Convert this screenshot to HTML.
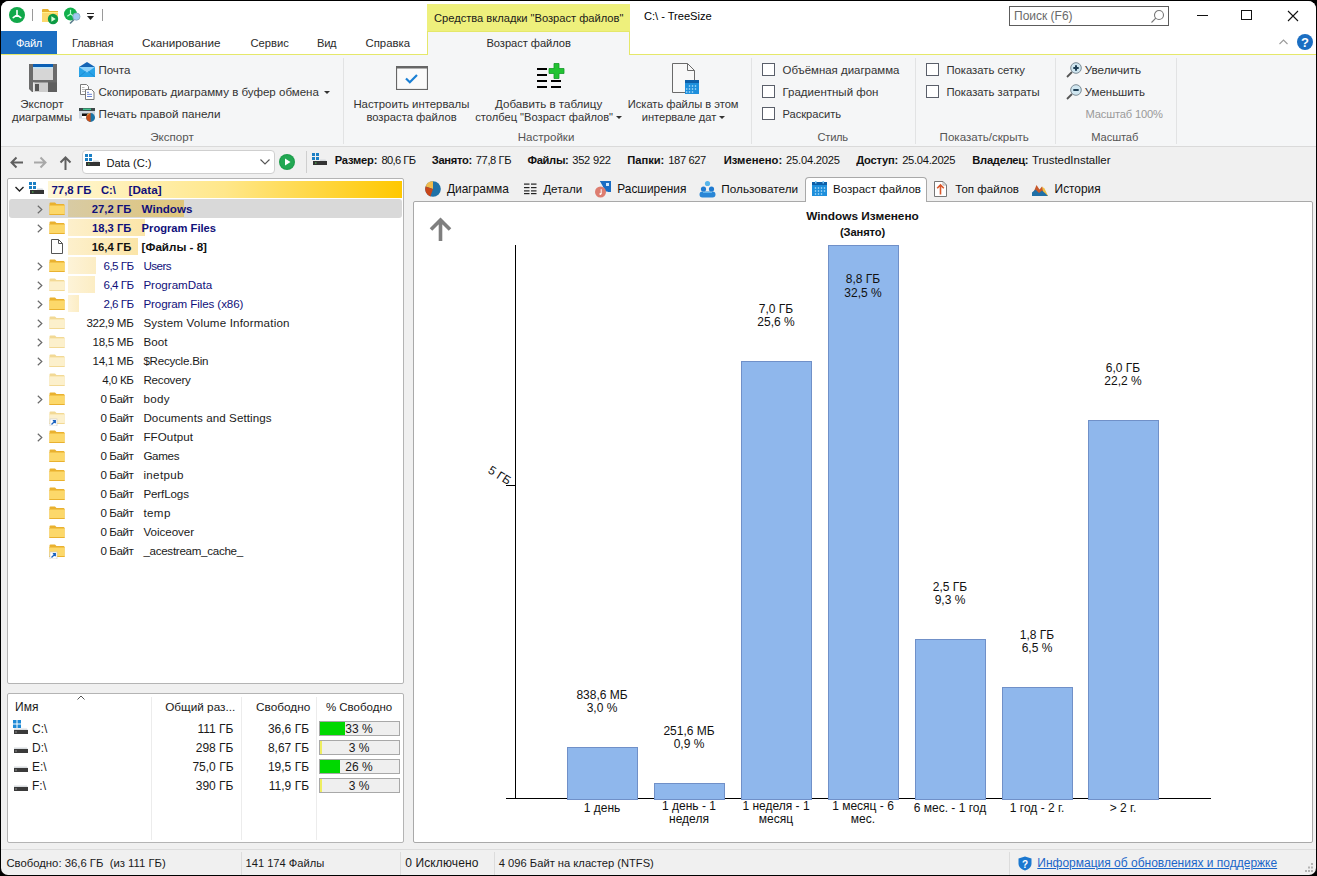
<!DOCTYPE html><html><head><meta charset="utf-8"><style>
html,body{margin:0;padding:0;}
body{width:1317px;height:876px;position:relative;overflow:hidden;background:#000;font-family:"Liberation Sans",sans-serif;font-size:12px;color:#1a1a1a;}
.a{position:absolute;box-sizing:border-box;}
.t{position:absolute;white-space:nowrap;line-height:14px;}
</style></head><body>
<div class="a" style="left:1px;top:1px;width:1315px;height:874px;background:#f0f0f0;border-radius:8px 8px 7px 7px;"></div>
<div class="a" style="left:1px;top:1px;width:1315px;height:53px;background:#fff;border-radius:8px 8px 0 0;"></div>
<div class="a" style="left:1px;top:55px;width:1315px;height:91px;background:#f5f6f7;"></div>
<div class="a" style="left:1px;top:54px;width:1315px;height:1px;background:#e5e86a;"></div>
<div class="a" style="left:1px;top:146px;width:1315px;height:1px;background:#dadada;"></div>
<svg class="a" style="left:9px;top:7px;" width="16" height="16" viewBox="0 0 16 16"><circle cx="8" cy="8" r="8" fill="#12a84a"/><path d="M8 8V3.5M8 8L4.2 10.6M8 8L11.8 10.6" stroke="#fff" stroke-width="1.6" fill="none" stroke-linecap="round"/></svg>
<div class="a" style="left:32px;top:9px;width:1px;height:12px;background:#9a9a9a;"></div>
<svg class="a" style="left:42px;top:9px;" width="17" height="16" viewBox="0 0 17 16"><path d="M0 1a1 1 0 0 1 1-1h5l1.5 2H16v11H0z" fill="#e8b22e"/><rect x="0" y="3" width="16" height="10" fill="#fcd96c"/><rect x="0" y="3" width="16" height="1" fill="#fff08a"/><circle cx="11" cy="10" r="5.2" fill="#0c9a44"/><path d="M9.4 7.2v5.6l4.3-2.8z" fill="#d8ffd8"/></svg>
<svg class="a" style="left:63px;top:7px;" width="18" height="18" viewBox="0 0 18 18"><circle cx="7.5" cy="7" r="6.5" fill="#12b04c"/><path d="M7.5 7V2.8M7.5 7L4.3 9.2M7.5 7L10.7 9.2" stroke="#b8ffd0" stroke-width="1.2" fill="none"/><path d="M11 12.5L7 16.5" stroke="#5a7d8c" stroke-width="1.6"/><circle cx="13.4" cy="9.6" r="3.6" fill="#9fcbf0" stroke="#8aa8c0" stroke-width="0.9"/></svg>
<div class="a" style="left:87px;top:13px;width:7px;height:1px;background:#222;"></div>
<svg class="a" style="left:87px;top:16px;" width="7" height="4" viewBox="0 0 7 4"><path d="M0 0h7L3.5 4z" fill="#222"/></svg>
<div class="a" style="left:102px;top:9px;width:1px;height:12px;background:#9a9a9a;"></div>
<div class="a" style="left:427px;top:4px;width:203px;height:27px;background:#eef07c;"></div>
<div class="t" style="left:434px;top:11px;font-size:11.16px;color:#1a1a1a;letter-spacing:-0.02px;">Средства вкладки "Возраст файлов"</div>
<div class="t" style="left:644px;top:9px;font-size:11.16px;color:#000;letter-spacing:-0.04px;">C:\ - TreeSize</div>
<div class="a" style="left:1009px;top:6px;width:160px;height:20px;border:1px solid #5c5c5c;background:#fff;"></div>
<div class="t" style="left:1014px;top:9px;color:#6a6a6a;">Поиск (F6)</div>
<svg class="a" style="left:1150px;top:9px;" width="15" height="15" viewBox="0 0 15 15"><circle cx="9" cy="6" r="4.5" fill="none" stroke="#777" stroke-width="1.1"/><path d="M5.8 9.2L1.5 13.5" stroke="#777" stroke-width="1.1"/></svg>
<div class="a" style="left:1197px;top:15px;width:11px;height:1px;background:#111;"></div>
<div class="a" style="left:1241px;top:10px;width:11px;height:10px;border:1px solid #111;"></div>
<svg class="a" style="left:1287px;top:10px;" width="12" height="12" viewBox="0 0 12 12"><path d="M1 1L11 11M11 1L1 11" stroke="#111" stroke-width="1.1"/></svg>
<div class="a" style="left:1px;top:31px;width:56px;height:23px;background:#1b6ec2;"></div>
<div class="t" style="left:16px;top:36px;font-size:11.16px;color:#fff;letter-spacing:-0.36px;">Файл</div>
<div class="t" style="left:72px;top:36px;font-size:11.16px;color:#2b2b2b;letter-spacing:-0.17px;">Главная</div>
<div class="t" style="left:142px;top:36px;font-size:11.71px;color:#2b2b2b;">Сканирование</div>
<div class="t" style="left:250.5px;top:36px;font-size:11.21px;color:#2b2b2b;">Сервис</div>
<div class="t" style="left:317px;top:36px;font-size:11.16px;color:#2b2b2b;letter-spacing:-0.3px;">Вид</div>
<div class="t" style="left:365.5px;top:36px;font-size:11.37px;color:#2b2b2b;">Справка</div>
<div class="a" style="left:427px;top:31px;width:203px;height:24px;background:#f5f6f7;border:1px solid #e5e86a;border-bottom:none;"></div>
<div class="t" style="left:486.4px;top:36px;font-size:11.16px;color:#2b2b2b;letter-spacing:-0.05px;">Возраст файлов</div>
<svg class="a" style="left:1279px;top:39px;" width="9" height="6" viewBox="0 0 9 6"><path d="M0.5 5L4.5 1L8.5 5" stroke="#9a9a9a" stroke-width="1.1" fill="none"/></svg>
<svg class="a" style="left:1297px;top:34px;" width="16" height="16" viewBox="0 0 16 16"><circle cx="8" cy="8" r="8" fill="#1b6ec2"/><text x="8" y="13" text-anchor="middle" font-family="Liberation Sans" font-weight="bold" font-size="13" fill="#fff">?</text></svg>
<div class="a" style="left:343px;top:58px;width:1px;height:86px;background:#e2e3e4;"></div>
<div class="a" style="left:751px;top:58px;width:1px;height:86px;background:#e2e3e4;"></div>
<div class="a" style="left:915px;top:58px;width:1px;height:86px;background:#e2e3e4;"></div>
<div class="a" style="left:1055px;top:58px;width:1px;height:86px;background:#e2e3e4;"></div>
<div class="a" style="left:1176px;top:58px;width:1px;height:86px;background:#e2e3e4;"></div>
<svg class="a" style="left:29px;top:64px;" width="28" height="28" viewBox="0 0 28 28"><path d="M0 0h28v28H3l-3-3z" fill="#6b6b6b"/><rect x="4" y="0" width="20" height="3" fill="#0a5fb4"/><rect x="4" y="3" width="20" height="13" fill="#d6d6d6"/><rect x="4" y="3" width="20" height="1.5" fill="#bfe3f5"/><rect x="4" y="18.5" width="15" height="9.5" fill="#cdcdcd"/><rect x="4" y="18.5" width="1.5" height="9.5" fill="#e6e6e6"/><rect x="6" y="20" width="4" height="7" fill="#555"/><rect x="19" y="18.5" width="9" height="9.5" fill="#5f5f5f"/></svg>
<div class="t" style="left:20.2px;top:97px;font-size:11.52px;color:#333;">Экспорт</div>
<div class="t" style="left:12px;top:110px;font-size:11.42px;color:#333;">диаграммы</div>
<svg class="a" style="left:79px;top:62px;" width="16" height="15" viewBox="0 0 16 15"><path d="M0 5L8 0L16 5V15H0z" fill="#1565b5"/><path d="M0 5h16v10H0z" fill="#29a3e8"/><path d="M0 5L8 10.5L16 5" fill="#8fd3fb"/><path d="M0 15L6.5 9.5M16 15L9.5 9.5" stroke="#1b87cf" stroke-width="0.8"/></svg>
<div class="t" style="left:98.4px;top:63px;font-size:11.56px;color:#333;">Почта</div>
<svg class="a" style="left:80px;top:84px;" width="16" height="16" viewBox="0 0 16 16"><path d="M0.5 0.5h6l2 2v8h-8z" fill="#fff" stroke="#7a7a7a" stroke-width="1"/><path d="M2 3.5h2.5M2 5.5h3M2 7.5h3" stroke="#a8a8a8" stroke-width="0.8"/><path d="M5.5 5.5h6l2.5 2.5v7.5h-8.5z" fill="#fff" stroke="#7a7a7a" stroke-width="1"/><path d="M7 8.3h2M7 10.3h5M7 12.5h5" stroke="#5a78d0" stroke-width="0.9"/></svg>
<div class="t" style="left:98.5px;top:85px;font-size:11.54px;color:#333;">Скопировать диаграмму в буфер обмена</div>
<svg class="a" style="left:324px;top:91px;" width="6" height="3" viewBox="0 0 6 3"><path d="M0 0h6L3 3z" fill="#333"/></svg>
<svg class="a" style="left:79px;top:107px;" width="17" height="16" viewBox="0 0 17 16"><rect x="0" y="1" width="16" height="3" fill="#3d4a4a"/><rect x="4" y="1.5" width="8" height="1.5" fill="#3fc08a"/><rect x="0" y="4" width="16" height="7.5" fill="#cfd6df"/><rect x="3" y="6.5" width="7" height="2.5" fill="#111"/><rect x="3" y="9" width="5" height="2" fill="#fff"/><circle cx="11.6" cy="10.5" r="4.4" fill="#1a74a8"/><path d="M11.6 6.1A4.4 4.4 0 0 0 11.6 14.9z" fill="#c8501a"/><path d="M11.6 6.1A4.4 4.4 0 0 0 7.4 9z" fill="#f0b860"/></svg>
<div class="t" style="left:98.5px;top:107px;font-size:11.69px;color:#333;">Печать правой панели</div>
<div class="t" style="left:150.3px;top:130px;font-size:11.58px;color:#555;">Экспорт</div>
<svg class="a" style="left:396px;top:66px;" width="32" height="24" viewBox="0 0 32 24"><rect x="0.5" y="0.5" width="31" height="23" fill="#fafafa" stroke="#666" stroke-width="1.2"/><rect x="0.5" y="0.5" width="31" height="2" fill="#666"/><path d="M10 12.5L13.8 16.2L21 9" stroke="#1a7fd4" stroke-width="2.2" fill="none"/></svg>
<div class="t" style="left:353.4px;top:97px;font-size:11.36px;color:#333;">Настроить интервалы</div>
<div class="t" style="left:366.4px;top:110px;font-size:11.26px;color:#333;">возраста файлов</div>
<svg class="a" style="left:537px;top:63px;" width="28" height="26" viewBox="0 0 28 26"><g fill="#000"><rect x="0" y="5" width="10" height="2"/><rect x="0" y="11" width="10" height="2"/><rect x="0" y="17" width="10" height="2"/><rect x="0" y="23" width="10" height="2"/><rect x="14" y="17" width="10" height="2"/><rect x="14" y="23" width="10" height="2"/></g><path d="M17 0.5h5v5h5v5h-5v5h-5v-5h-5v-5h5z" fill="#22c332" stroke="#14992a" stroke-width="0.8"/></svg>
<div class="t" style="left:495px;top:97px;font-size:11.6px;color:#333;">Добавить в таблицу</div>
<div class="t" style="left:475.2px;top:110px;font-size:11.16px;color:#333;letter-spacing:-0.01px;">столбец "Возраст файлов"</div>
<svg class="a" style="left:616px;top:116px;" width="6" height="3" viewBox="0 0 6 3"><path d="M0 0h6L3 3z" fill="#333"/></svg>
<svg class="a" style="left:672px;top:63px;" width="27" height="31" viewBox="0 0 27 31"><path d="M0.5 0.5h15l7 7v22h-22z" fill="#f8f8f8" stroke="#6a6a6a" stroke-width="1"/><path d="M15.5 0.5v7h7" fill="none" stroke="#6a6a6a" stroke-width="1"/><rect x="13" y="17" width="14" height="14" fill="#1e8fdc"/><rect x="13" y="17" width="14" height="3" fill="#0d5fa8"/><g fill="#bfe6ff"><circle cx="17.5" cy="23" r="0.8"/><circle cx="20.5" cy="23" r="0.8"/><circle cx="23.5" cy="23" r="0.8"/><circle cx="14.7" cy="26" r="0.8"/><circle cx="17.5" cy="26" r="0.8"/><circle cx="20.5" cy="26" r="0.8"/><circle cx="23.5" cy="26" r="0.8"/><circle cx="14.7" cy="29" r="0.8"/><circle cx="17.5" cy="29" r="0.8"/><circle cx="20.5" cy="29" r="0.8"/></g></svg>
<div class="t" style="left:627.8px;top:97px;font-size:11.16px;color:#333;letter-spacing:-0.03px;">Искать файлы в этом</div>
<div class="t" style="left:641.8px;top:110px;font-size:11.16px;color:#333;letter-spacing:-0.06px;">интервале дат</div>
<svg class="a" style="left:719px;top:116px;" width="6" height="3" viewBox="0 0 6 3"><path d="M0 0h6L3 3z" fill="#333"/></svg>
<div class="t" style="left:517.8px;top:130px;font-size:11.54px;color:#555;">Настройки</div>
<div class="a" style="left:762px;top:63px;width:13px;height:13px;border:1px solid #5a5f6a;background:#fff;"></div>
<div class="t" style="left:782.5px;top:63px;font-size:11.45px;color:#333;">Объёмная диаграмма</div>
<div class="a" style="left:762px;top:85px;width:13px;height:13px;border:1px solid #5a5f6a;background:#fff;"></div>
<div class="t" style="left:782.5px;top:85px;font-size:11.5px;color:#333;">Градиентный фон</div>
<div class="a" style="left:762px;top:107px;width:13px;height:13px;border:1px solid #5a5f6a;background:#fff;"></div>
<div class="t" style="left:782.5px;top:107px;font-size:11.16px;color:#333;letter-spacing:-0.04px;">Раскрасить</div>
<div class="t" style="left:817.5px;top:130px;font-size:11.16px;color:#555;letter-spacing:-0.27px;">Стиль</div>
<div class="a" style="left:926px;top:63px;width:13px;height:13px;border:1px solid #5a5f6a;background:#fff;"></div>
<div class="t" style="left:946.4px;top:63px;font-size:11.29px;color:#333;">Показать сетку</div>
<div class="a" style="left:926px;top:85px;width:13px;height:13px;border:1px solid #5a5f6a;background:#fff;"></div>
<div class="t" style="left:946.4px;top:85px;font-size:11.31px;color:#333;">Показать затраты</div>
<div class="t" style="left:939.6px;top:130px;font-size:11.57px;color:#555;">Показать/скрыть</div>
<svg class="a" style="left:1066px;top:62px;" width="16" height="16" viewBox="0 0 16 16"><path d="M1 15L6 10" stroke="#555" stroke-width="1.8"/><circle cx="10" cy="6" r="5.3" fill="#cfe6f0" stroke="#7d8c96" stroke-width="1"/><path d="M7.3 6h5.4M10 3.3v5.4" stroke="#1f3f55" stroke-width="2"/></svg>
<div class="t" style="left:1084.7px;top:63px;font-size:11.69px;color:#333;">Увеличить</div>
<svg class="a" style="left:1066px;top:84px;" width="16" height="16" viewBox="0 0 16 16"><path d="M1 15L6 10" stroke="#555" stroke-width="1.8"/><circle cx="10" cy="6" r="5.3" fill="#cfe6f0" stroke="#7d8c96" stroke-width="1"/><path d="M7.3 6h5.4" stroke="#1f3f55" stroke-width="2"/></svg>
<div class="t" style="left:1084.7px;top:85px;font-size:11.51px;color:#333;">Уменьшить</div>
<div class="t" style="left:1085.5px;top:107px;font-size:11.16px;color:#9a9a9a;letter-spacing:-0.18px;">Масштаб 100%</div>
<div class="t" style="left:1091.3px;top:130px;font-size:11.16px;color:#555;letter-spacing:-0.12px;">Масштаб</div>
<svg class="a" style="left:10px;top:156px;" width="14" height="13" viewBox="0 0 14 13"><path d="M13 6.5H2M6.5 1.5L1.5 6.5L6.5 11.5" stroke="#5f5f5f" stroke-width="2" fill="none"/></svg>
<svg class="a" style="left:33px;top:156px;" width="14" height="13" viewBox="0 0 14 13"><path d="M1 6.5H12M7.5 1.5L12.5 6.5L7.5 11.5" stroke="#a8a8a8" stroke-width="2" fill="none"/></svg>
<svg class="a" style="left:59px;top:156px;" width="13" height="14" viewBox="0 0 13 14"><path d="M6.5 14V2M1.5 6.5L6.5 1.5L11.5 6.5" stroke="#5f5f5f" stroke-width="2" fill="none"/></svg>
<div class="a" style="left:82px;top:150px;width:193px;height:24px;background:#fff;border:1px solid #cfcfcf;border-radius:4px;"></div>
<svg class="a" style="left:85px;top:154px;" width="16" height="13" viewBox="0 0 16 13"><g fill="#1b7fc4"><rect x="0" y="0" width="3" height="3"/><rect x="4" y="0" width="3" height="3"/><rect x="0" y="4" width="3" height="3"/><rect x="4" y="4" width="3" height="3"/></g><path d="M8 6.5h5.5l1 1.5H8z" fill="#d6dadd"/><rect x="1" y="8" width="14" height="4" fill="#333"/><rect x="3" y="9.5" width="1.5" height="1" fill="#5c5"/></svg>
<div class="t" style="left:106.6px;top:156px;font-size:11.16px;color:#111;letter-spacing:-0.05px;">Data (C:)</div>
<svg class="a" style="left:260px;top:159px;" width="10" height="6" viewBox="0 0 10 6"><path d="M0.5 0.5L5 5L9.5 0.5" stroke="#555" stroke-width="1.1" fill="none"/></svg>
<svg class="a" style="left:279px;top:154px;" width="16" height="16" viewBox="0 0 16 16"><circle cx="8" cy="8" r="8" fill="#1e9e4c"/><circle cx="8" cy="8" r="6.8" fill="#22a853"/><path d="M6 4.5v7l5.5-3.5z" fill="#fff"/></svg>
<div class="a" style="left:306px;top:151px;width:1px;height:22px;background:#cfcfcf;"></div>
<svg class="a" style="left:312px;top:153px;" width="16" height="13" viewBox="0 0 16 13"><g fill="#1b7fc4"><rect x="0" y="0" width="3" height="3"/><rect x="4" y="0" width="3" height="3"/><rect x="0" y="4" width="3" height="3"/><rect x="4" y="4" width="3" height="3"/></g><path d="M8 6.5h5.5l1 1.5H8z" fill="#d6dadd"/><rect x="1" y="8" width="14" height="4" fill="#333"/><rect x="3" y="9.5" width="1.5" height="1" fill="#5c5"/></svg>
<div class="t" style="left:334.7px;top:153px;font-size:11.16px;font-weight:bold;color:#111;letter-spacing:-0.19px;">Размер:</div>
<div class="t" style="left:381.4px;top:153px;font-size:11.16px;color:#111;letter-spacing:-0.6px;">80,6 ГБ</div>
<div class="t" style="left:431.8px;top:153px;font-size:11.16px;font-weight:bold;color:#111;letter-spacing:-0.32px;">Занято:</div>
<div class="t" style="left:475.8px;top:153px;font-size:11.16px;color:#111;letter-spacing:-0.41px;">77,8 ГБ</div>
<div class="t" style="left:527.5px;top:153px;font-size:11.16px;font-weight:bold;color:#111;letter-spacing:-0.32px;">Файлы:</div>
<div class="t" style="left:572.2px;top:153px;font-size:11.16px;color:#111;letter-spacing:-0.24px;">352 922</div>
<div class="t" style="left:627.3px;top:153px;font-size:11.16px;font-weight:bold;color:#111;letter-spacing:-0.04px;">Папки:</div>
<div class="t" style="left:668.3px;top:153px;font-size:11.16px;color:#111;letter-spacing:-0.39px;">187 627</div>
<div class="t" style="left:723.7px;top:153px;font-size:11.26px;font-weight:bold;color:#111;">Изменено:</div>
<div class="t" style="left:786.1px;top:153px;font-size:11.16px;color:#111;letter-spacing:-0.22px;">25.04.2025</div>
<div class="t" style="left:856.2px;top:153px;font-size:11.16px;font-weight:bold;color:#111;letter-spacing:-0.24px;">Доступ:</div>
<div class="t" style="left:902.2px;top:153px;font-size:11.16px;color:#111;letter-spacing:-0.28px;">25.04.2025</div>
<div class="t" style="left:972.3px;top:153px;font-size:11.16px;font-weight:bold;color:#111;letter-spacing:-0.26px;">Владелец:</div>
<div class="t" style="left:1031.9px;top:153px;font-size:11.48px;color:#111;">TrustedInstaller</div>
<div class="a" style="left:7px;top:178px;width:397px;height:506px;background:#fff;border:1px solid #b4b4b4;border-radius:2px;"></div>
<div class="a" style="left:48px;top:181px;width:354px;height:17px;background:linear-gradient(to right,#fff7d6 0%,#ffe78a 50%,#ffc800 100%);"></div>
<svg class="a" style="left:15px;top:186px;" width="9" height="7" viewBox="0 0 9 7"><path d="M0.5 1L4.5 5L8.5 1" stroke="#222" stroke-width="1.4" fill="none"/></svg>
<svg class="a" style="left:29px;top:182px;" width="16" height="13" viewBox="0 0 16 13"><g fill="#1b7fc4"><rect x="0" y="0" width="3" height="3"/><rect x="4" y="0" width="3" height="3"/><rect x="0" y="4" width="3" height="3"/><rect x="4" y="4" width="3" height="3"/></g><path d="M8 6.5h5.5l1 1.5H8z" fill="#d6dadd"/><rect x="1" y="8" width="14" height="4" fill="#333"/><rect x="3" y="9.5" width="1.5" height="1" fill="#5c5"/></svg>
<div class="t" style="left:51.5px;top:183px;font-size:11.39px;font-weight:bold;color:#10107a;">77,8 ГБ</div>
<div class="t" style="left:101px;top:183px;font-size:11.25px;font-weight:bold;color:#10107a;">C:\</div>
<div class="t" style="left:128.6px;top:183px;font-size:11.64px;font-weight:bold;color:#10107a;">[Data]</div>
<div class="a" style="left:9px;top:199px;width:393px;height:19px;background:#d9d9d9;border-radius:3px;"></div>
<div class="a" style="left:68px;top:200px;width:116px;height:17px;background:linear-gradient(to right,#d8cba4,#dfc57a);"></div>
<svg class="a" style="left:37px;top:205px;" width="6" height="9" viewBox="0 0 6 9"><path d="M0.8 0.8L4.8 4.5L0.8 8.2" stroke="#6a6a6a" stroke-width="1.2" fill="none"/></svg>
<svg class="a" style="left:49px;top:202px;" width="16" height="15" viewBox="0 0 16 15"><path d="M0.5 1.5a1 1 0 0 1 1-1h4.5l1.5 1.5h7a1 1 0 0 1 1 1V13H0.5z" fill="#e9b12f"/><rect x="0.5" y="3" width="15" height="10" rx="0.5" fill="#fcd86a"/><rect x="0.5" y="3" width="15" height="1" fill="#f3c44a"/><rect x="0.5" y="12" width="15" height="1" fill="#e9b12f"/></svg>
<div class="t" style="right:1185.7px;top:201.5px;font-size:11.28px;font-weight:bold;color:#10107a;">27,2 ГБ</div>
<div class="t" style="left:141.6px;top:201.5px;font-size:11.6px;font-weight:bold;color:#10107a;">Windows</div>
<div class="a" style="left:68px;top:219px;width:77px;height:17px;background:linear-gradient(to right,#fdf0cc,#fbe5a8);"></div>
<svg class="a" style="left:37px;top:224px;" width="6" height="9" viewBox="0 0 6 9"><path d="M0.8 0.8L4.8 4.5L0.8 8.2" stroke="#6a6a6a" stroke-width="1.2" fill="none"/></svg>
<svg class="a" style="left:49px;top:221px;" width="16" height="15" viewBox="0 0 16 15"><path d="M0.5 1.5a1 1 0 0 1 1-1h4.5l1.5 1.5h7a1 1 0 0 1 1 1V13H0.5z" fill="#e9b12f"/><rect x="0.5" y="3" width="15" height="10" rx="0.5" fill="#fcd86a"/><rect x="0.5" y="3" width="15" height="1" fill="#f3c44a"/><rect x="0.5" y="12" width="15" height="1" fill="#e9b12f"/></svg>
<div class="t" style="right:1185.7px;top:220.5px;font-size:11.2px;font-weight:bold;color:#10107a;">18,3 ГБ</div>
<div class="t" style="left:141.6px;top:220.5px;font-size:11.17px;font-weight:bold;color:#10107a;">Program Files</div>
<div class="a" style="left:68px;top:238px;width:70px;height:17px;background:linear-gradient(to right,#fdf0cc,#fbe5a8);"></div>
<svg class="a" style="left:51px;top:239px;" width="12" height="15" viewBox="0 0 12 15"><path d="M0.5 0.5h7l4 4v10h-11z" fill="#fff" stroke="#555" stroke-width="1"/><path d="M7.5 0.5v4h4" fill="none" stroke="#555" stroke-width="1"/></svg>
<div class="t" style="right:1185.7px;top:239.5px;font-size:11.28px;font-weight:bold;color:#111;">16,4 ГБ</div>
<div class="t" style="left:141.6px;top:239.5px;font-size:11.64px;font-weight:bold;color:#111;">[Файлы - 8]</div>
<div class="a" style="left:68px;top:257px;width:28px;height:17px;background:linear-gradient(to right,#fdf3d8,#fcedc4);"></div>
<svg class="a" style="left:37px;top:262px;" width="6" height="9" viewBox="0 0 6 9"><path d="M0.8 0.8L4.8 4.5L0.8 8.2" stroke="#6a6a6a" stroke-width="1.2" fill="none"/></svg>
<svg class="a" style="left:49px;top:259px;" width="16" height="15" viewBox="0 0 16 15"><path d="M0.5 1.5a1 1 0 0 1 1-1h4.5l1.5 1.5h7a1 1 0 0 1 1 1V13H0.5z" fill="#e9b12f"/><rect x="0.5" y="3" width="15" height="10" rx="0.5" fill="#fcd86a"/><rect x="0.5" y="3" width="15" height="1" fill="#f3c44a"/><rect x="0.5" y="12" width="15" height="1" fill="#e9b12f"/></svg>
<div class="t" style="right:1183.5px;top:258.5px;font-size:11.6px;color:#10107a;letter-spacing:-0.54px;">6,5 ГБ</div>
<div class="t" style="left:143.4px;top:258.5px;font-size:11.6px;color:#10107a;letter-spacing:-0.54px;">Users</div>
<div class="a" style="left:68px;top:276px;width:27px;height:17px;background:linear-gradient(to right,#fdf3d8,#fcedc4);"></div>
<svg class="a" style="left:37px;top:281px;" width="6" height="9" viewBox="0 0 6 9"><path d="M0.8 0.8L4.8 4.5L0.8 8.2" stroke="#6a6a6a" stroke-width="1.2" fill="none"/></svg>
<svg class="a" style="left:49px;top:278px;" width="16" height="15" viewBox="0 0 16 15"><path d="M0.5 1.5a1 1 0 0 1 1-1h4.5l1.5 1.5h7a1 1 0 0 1 1 1V13H0.5z" fill="#f2d995"/><rect x="0.5" y="3" width="15" height="10" rx="0.5" fill="#fcf0cc"/><rect x="0.5" y="3" width="15" height="1" fill="#fae8b5"/><rect x="0.5" y="12" width="15" height="1" fill="#f2d995"/></svg>
<div class="t" style="right:1183.5px;top:277.5px;font-size:11.6px;color:#10107a;letter-spacing:-0.54px;">6,4 ГБ</div>
<div class="t" style="left:143.4px;top:277.5px;font-size:11.6px;color:#10107a;letter-spacing:-0.02px;">ProgramData</div>
<div class="a" style="left:68px;top:295px;width:10.5px;height:17px;background:linear-gradient(to right,#fdf3d8,#fcedc4);"></div>
<svg class="a" style="left:37px;top:300px;" width="6" height="9" viewBox="0 0 6 9"><path d="M0.8 0.8L4.8 4.5L0.8 8.2" stroke="#6a6a6a" stroke-width="1.2" fill="none"/></svg>
<svg class="a" style="left:49px;top:297px;" width="16" height="15" viewBox="0 0 16 15"><path d="M0.5 1.5a1 1 0 0 1 1-1h4.5l1.5 1.5h7a1 1 0 0 1 1 1V13H0.5z" fill="#e9b12f"/><rect x="0.5" y="3" width="15" height="10" rx="0.5" fill="#fcd86a"/><rect x="0.5" y="3" width="15" height="1" fill="#f3c44a"/><rect x="0.5" y="12" width="15" height="1" fill="#e9b12f"/></svg>
<div class="t" style="right:1183.5px;top:296.5px;font-size:11.6px;color:#10107a;letter-spacing:-0.54px;">2,6 ГБ</div>
<div class="t" style="left:143.4px;top:296.5px;font-size:11.6px;color:#10107a;letter-spacing:-0.1px;">Program Files (x86)</div>
<svg class="a" style="left:37px;top:319px;" width="6" height="9" viewBox="0 0 6 9"><path d="M0.8 0.8L4.8 4.5L0.8 8.2" stroke="#6a6a6a" stroke-width="1.2" fill="none"/></svg>
<svg class="a" style="left:49px;top:316px;" width="16" height="15" viewBox="0 0 16 15"><path d="M0.5 1.5a1 1 0 0 1 1-1h4.5l1.5 1.5h7a1 1 0 0 1 1 1V13H0.5z" fill="#f2d995"/><rect x="0.5" y="3" width="15" height="10" rx="0.5" fill="#fcf0cc"/><rect x="0.5" y="3" width="15" height="1" fill="#fae8b5"/><rect x="0.5" y="12" width="15" height="1" fill="#f2d995"/></svg>
<div class="t" style="right:1183.5px;top:315.5px;font-size:11.6px;color:#1a1a1a;letter-spacing:-0.3px;">322,9 МБ</div>
<div class="t" style="left:143.4px;top:315.5px;font-size:11.6px;color:#1a1a1a;letter-spacing:0.18px;">System Volume Information</div>
<svg class="a" style="left:37px;top:338px;" width="6" height="9" viewBox="0 0 6 9"><path d="M0.8 0.8L4.8 4.5L0.8 8.2" stroke="#6a6a6a" stroke-width="1.2" fill="none"/></svg>
<svg class="a" style="left:49px;top:335px;" width="16" height="15" viewBox="0 0 16 15"><path d="M0.5 1.5a1 1 0 0 1 1-1h4.5l1.5 1.5h7a1 1 0 0 1 1 1V13H0.5z" fill="#f2d995"/><rect x="0.5" y="3" width="15" height="10" rx="0.5" fill="#fcf0cc"/><rect x="0.5" y="3" width="15" height="1" fill="#fae8b5"/><rect x="0.5" y="12" width="15" height="1" fill="#f2d995"/></svg>
<div class="t" style="right:1183.5px;top:334.5px;font-size:11.6px;color:#1a1a1a;letter-spacing:-0.3px;">18,5 МБ</div>
<div class="t" style="left:143.4px;top:334.5px;font-size:11.6px;color:#1a1a1a;letter-spacing:0.08px;">Boot</div>
<svg class="a" style="left:37px;top:357px;" width="6" height="9" viewBox="0 0 6 9"><path d="M0.8 0.8L4.8 4.5L0.8 8.2" stroke="#6a6a6a" stroke-width="1.2" fill="none"/></svg>
<svg class="a" style="left:49px;top:354px;" width="16" height="15" viewBox="0 0 16 15"><path d="M0.5 1.5a1 1 0 0 1 1-1h4.5l1.5 1.5h7a1 1 0 0 1 1 1V13H0.5z" fill="#f2d995"/><rect x="0.5" y="3" width="15" height="10" rx="0.5" fill="#fcf0cc"/><rect x="0.5" y="3" width="15" height="1" fill="#fae8b5"/><rect x="0.5" y="12" width="15" height="1" fill="#f2d995"/></svg>
<div class="t" style="right:1183.5px;top:353.5px;font-size:11.6px;color:#1a1a1a;letter-spacing:-0.3px;">14,1 МБ</div>
<div class="t" style="left:143.4px;top:353.5px;font-size:11.6px;color:#1a1a1a;letter-spacing:-0.24px;">$Recycle.Bin</div>
<svg class="a" style="left:49px;top:373px;" width="16" height="15" viewBox="0 0 16 15"><path d="M0.5 1.5a1 1 0 0 1 1-1h4.5l1.5 1.5h7a1 1 0 0 1 1 1V13H0.5z" fill="#f2d995"/><rect x="0.5" y="3" width="15" height="10" rx="0.5" fill="#fcf0cc"/><rect x="0.5" y="3" width="15" height="1" fill="#fae8b5"/><rect x="0.5" y="12" width="15" height="1" fill="#f2d995"/></svg>
<div class="t" style="right:1183.5px;top:372.5px;font-size:11.6px;color:#1a1a1a;letter-spacing:-0.39px;">4,0 КБ</div>
<div class="t" style="left:143.4px;top:372.5px;font-size:11.6px;color:#1a1a1a;letter-spacing:-0.21px;">Recovery</div>
<svg class="a" style="left:37px;top:395px;" width="6" height="9" viewBox="0 0 6 9"><path d="M0.8 0.8L4.8 4.5L0.8 8.2" stroke="#6a6a6a" stroke-width="1.2" fill="none"/></svg>
<svg class="a" style="left:49px;top:392px;" width="16" height="15" viewBox="0 0 16 15"><path d="M0.5 1.5a1 1 0 0 1 1-1h4.5l1.5 1.5h7a1 1 0 0 1 1 1V13H0.5z" fill="#e9b12f"/><rect x="0.5" y="3" width="15" height="10" rx="0.5" fill="#fcd86a"/><rect x="0.5" y="3" width="15" height="1" fill="#f3c44a"/><rect x="0.5" y="12" width="15" height="1" fill="#e9b12f"/></svg>
<div class="t" style="right:1183.5px;top:391.5px;font-size:11.6px;color:#1a1a1a;letter-spacing:-0.42px;">0 Байт</div>
<div class="t" style="left:143.4px;top:391.5px;font-size:11.6px;color:#1a1a1a;letter-spacing:0.33px;">body</div>
<svg class="a" style="left:49px;top:411px;" width="16" height="15" viewBox="0 0 16 15"><path d="M0.5 1.5a1 1 0 0 1 1-1h4.5l1.5 1.5h7a1 1 0 0 1 1 1V13H0.5z" fill="#f2d995"/><rect x="0.5" y="3" width="15" height="10" rx="0.5" fill="#fcf0cc"/><rect x="0.5" y="3" width="15" height="1" fill="#fae8b5"/><rect x="0.5" y="12" width="15" height="1" fill="#f2d995"/><rect x="1" y="8" width="7" height="7" fill="#fff" stroke="#c8c8c8" stroke-width="0.6"/><path d="M2.5 13.5L6 10M3.8 9.7h2.5v2.5" stroke="#1a62c0" stroke-width="1.3" fill="none"/></svg>
<div class="t" style="right:1183.5px;top:410.5px;font-size:11.6px;color:#1a1a1a;letter-spacing:-0.42px;">0 Байт</div>
<div class="t" style="left:143.4px;top:410.5px;font-size:11.6px;color:#1a1a1a;letter-spacing:0.09px;">Documents and Settings</div>
<svg class="a" style="left:37px;top:433px;" width="6" height="9" viewBox="0 0 6 9"><path d="M0.8 0.8L4.8 4.5L0.8 8.2" stroke="#6a6a6a" stroke-width="1.2" fill="none"/></svg>
<svg class="a" style="left:49px;top:430px;" width="16" height="15" viewBox="0 0 16 15"><path d="M0.5 1.5a1 1 0 0 1 1-1h4.5l1.5 1.5h7a1 1 0 0 1 1 1V13H0.5z" fill="#e9b12f"/><rect x="0.5" y="3" width="15" height="10" rx="0.5" fill="#fcd86a"/><rect x="0.5" y="3" width="15" height="1" fill="#f3c44a"/><rect x="0.5" y="12" width="15" height="1" fill="#e9b12f"/></svg>
<div class="t" style="right:1183.5px;top:429.5px;font-size:11.6px;color:#1a1a1a;letter-spacing:-0.42px;">0 Байт</div>
<div class="t" style="left:143.4px;top:429.5px;font-size:11.6px;color:#1a1a1a;letter-spacing:0.1px;">FFOutput</div>
<svg class="a" style="left:49px;top:449px;" width="16" height="15" viewBox="0 0 16 15"><path d="M0.5 1.5a1 1 0 0 1 1-1h4.5l1.5 1.5h7a1 1 0 0 1 1 1V13H0.5z" fill="#e9b12f"/><rect x="0.5" y="3" width="15" height="10" rx="0.5" fill="#fcd86a"/><rect x="0.5" y="3" width="15" height="1" fill="#f3c44a"/><rect x="0.5" y="12" width="15" height="1" fill="#e9b12f"/></svg>
<div class="t" style="right:1183.5px;top:448.5px;font-size:11.6px;color:#1a1a1a;letter-spacing:-0.42px;">0 Байт</div>
<div class="t" style="left:143.4px;top:448.5px;font-size:11.6px;color:#1a1a1a;letter-spacing:-0.32px;">Games</div>
<svg class="a" style="left:49px;top:468px;" width="16" height="15" viewBox="0 0 16 15"><path d="M0.5 1.5a1 1 0 0 1 1-1h4.5l1.5 1.5h7a1 1 0 0 1 1 1V13H0.5z" fill="#e9b12f"/><rect x="0.5" y="3" width="15" height="10" rx="0.5" fill="#fcd86a"/><rect x="0.5" y="3" width="15" height="1" fill="#f3c44a"/><rect x="0.5" y="12" width="15" height="1" fill="#e9b12f"/></svg>
<div class="t" style="right:1183.5px;top:467.5px;font-size:11.6px;color:#1a1a1a;letter-spacing:-0.42px;">0 Байт</div>
<div class="t" style="left:143.4px;top:467.5px;font-size:11.6px;color:#1a1a1a;letter-spacing:0.35px;">inetpub</div>
<svg class="a" style="left:49px;top:487px;" width="16" height="15" viewBox="0 0 16 15"><path d="M0.5 1.5a1 1 0 0 1 1-1h4.5l1.5 1.5h7a1 1 0 0 1 1 1V13H0.5z" fill="#e9b12f"/><rect x="0.5" y="3" width="15" height="10" rx="0.5" fill="#fcd86a"/><rect x="0.5" y="3" width="15" height="1" fill="#f3c44a"/><rect x="0.5" y="12" width="15" height="1" fill="#e9b12f"/></svg>
<div class="t" style="right:1183.5px;top:486.5px;font-size:11.6px;color:#1a1a1a;letter-spacing:-0.42px;">0 Байт</div>
<div class="t" style="left:143.4px;top:486.5px;font-size:11.6px;color:#1a1a1a;letter-spacing:-0.12px;">PerfLogs</div>
<svg class="a" style="left:49px;top:506px;" width="16" height="15" viewBox="0 0 16 15"><path d="M0.5 1.5a1 1 0 0 1 1-1h4.5l1.5 1.5h7a1 1 0 0 1 1 1V13H0.5z" fill="#e9b12f"/><rect x="0.5" y="3" width="15" height="10" rx="0.5" fill="#fcd86a"/><rect x="0.5" y="3" width="15" height="1" fill="#f3c44a"/><rect x="0.5" y="12" width="15" height="1" fill="#e9b12f"/></svg>
<div class="t" style="right:1183.5px;top:505.5px;font-size:11.6px;color:#1a1a1a;letter-spacing:-0.42px;">0 Байт</div>
<div class="t" style="left:143.4px;top:505.5px;font-size:11.6px;color:#1a1a1a;letter-spacing:0.4px;">temp</div>
<svg class="a" style="left:49px;top:525px;" width="16" height="15" viewBox="0 0 16 15"><path d="M0.5 1.5a1 1 0 0 1 1-1h4.5l1.5 1.5h7a1 1 0 0 1 1 1V13H0.5z" fill="#e9b12f"/><rect x="0.5" y="3" width="15" height="10" rx="0.5" fill="#fcd86a"/><rect x="0.5" y="3" width="15" height="1" fill="#f3c44a"/><rect x="0.5" y="12" width="15" height="1" fill="#e9b12f"/></svg>
<div class="t" style="right:1183.5px;top:524.5px;font-size:11.6px;color:#1a1a1a;letter-spacing:-0.42px;">0 Байт</div>
<div class="t" style="left:143.4px;top:524.5px;font-size:11.6px;color:#1a1a1a;letter-spacing:-0.02px;">Voiceover</div>
<svg class="a" style="left:49px;top:544px;" width="16" height="15" viewBox="0 0 16 15"><path d="M0.5 1.5a1 1 0 0 1 1-1h4.5l1.5 1.5h7a1 1 0 0 1 1 1V13H0.5z" fill="#e9b12f"/><rect x="0.5" y="3" width="15" height="10" rx="0.5" fill="#fcd86a"/><rect x="0.5" y="3" width="15" height="1" fill="#f3c44a"/><rect x="0.5" y="12" width="15" height="1" fill="#e9b12f"/><rect x="1" y="8" width="7" height="7" fill="#fff" stroke="#c8c8c8" stroke-width="0.6"/><path d="M2.5 13.5L6 10M3.8 9.7h2.5v2.5" stroke="#1a62c0" stroke-width="1.3" fill="none"/></svg>
<div class="t" style="right:1183.5px;top:543.5px;font-size:11.6px;color:#1a1a1a;letter-spacing:-0.42px;">0 Байт</div>
<div class="t" style="left:143.4px;top:543.5px;font-size:11.6px;color:#1a1a1a;letter-spacing:-0.29px;">_acestream_cache_</div>
<div class="a" style="left:7px;top:693px;width:397px;height:150px;background:#fff;border:1px solid #b4b4b4;border-radius:2px;"></div>
<div class="a" style="left:151px;top:697px;width:1px;height:143px;background:#ececec;"></div>
<div class="a" style="left:241px;top:697px;width:1px;height:143px;background:#ececec;"></div>
<div class="a" style="left:316px;top:697px;width:1px;height:143px;background:#ececec;"></div>
<svg class="a" style="left:77px;top:695px;" width="8" height="5" viewBox="0 0 8 5"><path d="M0.5 4.5L4 1L7.5 4.5" stroke="#555" stroke-width="1" fill="none"/></svg>
<div class="t" style="left:15px;top:700px;color:#1a1a1a;">Имя</div>
<div class="t" style="left:165.2px;top:700px;font-size:11.76px;color:#1a1a1a;">Общий раз...</div>
<div class="t" style="left:256px;top:700px;font-size:11.81px;color:#1a1a1a;">Свободно</div>
<div class="t" style="left:325.9px;top:700px;font-size:11.5px;color:#1a1a1a;">% Свободно</div>
<svg class="a" style="left:13px;top:720px;" width="16" height="16" viewBox="0 0 16 16"><g fill="#1e8ad6"><rect x="0" y="0" width="3.5" height="3.5"/><rect x="4.5" y="0" width="3.5" height="3.5"/><rect x="0" y="4.5" width="3.5" height="3.5"/><rect x="4.5" y="4.5" width="3.5" height="3.5"/></g><path d="M1 8.5h13l1 2H1z" fill="#d8dcdf"/><rect x="1" y="10" width="14" height="4" fill="#3a3a3a"/><rect x="2.5" y="11.5" width="1" height="1" fill="#ddd"/></svg>
<div class="t" style="left:32px;top:722px;color:#1a1a1a;">C:\</div>
<div class="t" style="right:1083.5px;top:722px;color:#1a1a1a;">111 ГБ</div>
<div class="t" style="right:1008px;top:722px;color:#1a1a1a;">36,6 ГБ</div>
<div class="a" style="left:319px;top:721px;width:81px;height:15px;background:#efefef;border:1px solid #a8a8a8;"></div>
<div class="a" style="left:320px;top:722px;width:25px;height:13px;background:#00d800;"></div>
<div class="t" style="left:209px;width:300px;text-align:center;top:722px;color:#1a1a1a;">33 %</div>
<svg class="a" style="left:13px;top:739px;" width="16" height="16" viewBox="0 0 16 16"><path d="M1 8.5h13l1 2H1z" fill="#d8dcdf"/><rect x="1" y="10" width="14" height="4" fill="#3a3a3a"/><rect x="2.5" y="11.5" width="1" height="1" fill="#ddd"/></svg>
<div class="t" style="left:32px;top:741px;color:#1a1a1a;">D:\</div>
<div class="t" style="right:1083.5px;top:741px;color:#1a1a1a;">298 ГБ</div>
<div class="t" style="right:1008px;top:741px;color:#1a1a1a;">8,67 ГБ</div>
<div class="a" style="left:319px;top:740px;width:81px;height:15px;background:#efefef;border:1px solid #a8a8a8;"></div>
<div class="a" style="left:320px;top:741px;width:2px;height:13px;background:#eeee60;"></div>
<div class="t" style="left:209px;width:300px;text-align:center;top:741px;color:#1a1a1a;">3 %</div>
<svg class="a" style="left:13px;top:758px;" width="16" height="16" viewBox="0 0 16 16"><path d="M1 8.5h13l1 2H1z" fill="#d8dcdf"/><rect x="1" y="10" width="14" height="4" fill="#3a3a3a"/><rect x="2.5" y="11.5" width="1" height="1" fill="#ddd"/></svg>
<div class="t" style="left:32px;top:760px;color:#1a1a1a;">E:\</div>
<div class="t" style="right:1083.5px;top:760px;color:#1a1a1a;">75,0 ГБ</div>
<div class="t" style="right:1008px;top:760px;color:#1a1a1a;">19,5 ГБ</div>
<div class="a" style="left:319px;top:759px;width:81px;height:15px;background:#efefef;border:1px solid #a8a8a8;"></div>
<div class="a" style="left:320px;top:760px;width:19.5px;height:13px;background:#00d800;"></div>
<div class="t" style="left:209px;width:300px;text-align:center;top:760px;color:#1a1a1a;">26 %</div>
<svg class="a" style="left:13px;top:777px;" width="16" height="16" viewBox="0 0 16 16"><path d="M1 8.5h13l1 2H1z" fill="#d8dcdf"/><rect x="1" y="10" width="14" height="4" fill="#3a3a3a"/><rect x="2.5" y="11.5" width="1" height="1" fill="#ddd"/></svg>
<div class="t" style="left:32px;top:779px;color:#1a1a1a;">F:\</div>
<div class="t" style="right:1083.5px;top:779px;color:#1a1a1a;">390 ГБ</div>
<div class="t" style="right:1008px;top:779px;color:#1a1a1a;">11,9 ГБ</div>
<div class="a" style="left:319px;top:778px;width:81px;height:15px;background:#efefef;border:1px solid #a8a8a8;"></div>
<div class="a" style="left:320px;top:779px;width:2px;height:13px;background:#eeee60;"></div>
<div class="t" style="left:209px;width:300px;text-align:center;top:779px;color:#1a1a1a;">3 %</div>
<div class="a" style="left:1px;top:849px;width:1315px;height:1px;background:#dcdcdc;"></div>
<div class="a" style="left:241px;top:852px;width:1px;height:23px;background:#dcdcdc;"></div>
<div class="a" style="left:400px;top:852px;width:1px;height:23px;background:#dcdcdc;"></div>
<div class="a" style="left:494px;top:852px;width:1px;height:23px;background:#dcdcdc;"></div>
<div class="a" style="left:1009px;top:852px;width:1px;height:23px;background:#dcdcdc;"></div>
<div class="t" style="left:6.4px;top:856px;font-size:11.32px;color:#1a1a1a;">Свободно: 36,6 ГБ&nbsp;&nbsp;(из 111 ГБ)</div>
<div class="t" style="left:245.5px;top:856px;font-size:11.16px;color:#1a1a1a;letter-spacing:-0.01px;">141 174 Файлы</div>
<div class="t" style="left:405.2px;top:856px;color:#1a1a1a;letter-spacing:0.13px;">0 Исключено</div>
<div class="t" style="left:498.8px;top:856px;font-size:11.18px;color:#1a1a1a;">4 096 Байт на кластер (NTFS)</div>
<svg class="a" style="left:1018px;top:856px;" width="14" height="15" viewBox="0 0 14 15"><path d="M7 0.5L13.5 2.5V7.5C13.5 11 10.5 13.5 7 14.5C3.5 13.5 0.5 11 0.5 7.5V2.5z" fill="#1b78d0"/><text x="7" y="11.5" text-anchor="middle" font-family="Liberation Sans" font-weight="bold" font-size="10" fill="#fff">?</text></svg>
<div class="t" style="left:1037.3px;top:856px;color:#1b66c9;text-decoration:underline;">Информация об обновлениях и поддержке</div>
<div class="a" style="left:413px;top:201px;width:900px;height:642px;background:#fff;border:1px solid #a9a9a9;border-radius:2px;"></div>
<div class="a" style="left:805px;top:177px;width:122px;height:25px;background:#fff;border:1px solid #a9a9a9;border-bottom:none;border-radius:4px 4px 0 0;"></div>
<svg class="a" style="left:425px;top:181px;" width="16" height="16" viewBox="0 0 16 16"><circle cx="8" cy="8" r="7.8" fill="#1f72a8"/><path d="M8 8L8 0.2A7.8 7.8 0 0 0 0.6 5.6z" fill="#f0bb4c"/><path d="M8 8L0.6 5.6A7.8 7.8 0 0 0 5.4 15.4z" fill="#c9461a"/></svg>
<div class="t" style="left:447px;top:182px;font-size:11.92px;color:#111;">Диаграмма</div>
<svg class="a" style="left:524px;top:183px;" width="13" height="12" viewBox="0 0 13 12"><g fill="#222"><rect x="0" y="0.5" width="5.5" height="1.2"/><rect x="0" y="4" width="5.5" height="1.2"/><rect x="0" y="7.3" width="5.5" height="1.2"/><rect x="0" y="10" width="5.5" height="1.2"/><rect x="7" y="0.5" width="5.5" height="1.2"/><rect x="7" y="4" width="5.5" height="1.2"/><rect x="7" y="7.3" width="5.5" height="1.2"/><rect x="7" y="10" width="5.5" height="1.2"/></g></svg>
<div class="t" style="left:543.2px;top:182px;font-size:11.68px;color:#111;">Детали</div>
<svg class="a" style="left:594px;top:180px;" width="18" height="18" viewBox="0 0 18 18"><path d="M6 1h11v11l-3-0z" fill="#1f6fc0"/><path d="M6 1h11v10.5H11.5z" fill="#1a6dc4"/><rect x="12" y="3" width="3" height="3" fill="#cfe8ff"/><circle cx="6.5" cy="12" r="5.5" fill="#dd7d70"/><path d="M7.2 9.2v4.8" stroke="#fff" stroke-width="1"/><circle cx="6.4" cy="14" r="1" fill="#fff"/></svg>
<div class="t" style="left:617.3px;top:182px;font-size:11.88px;color:#111;">Расширения</div>
<svg class="a" style="left:699px;top:180px;" width="17" height="18" viewBox="0 0 17 18"><circle cx="8.5" cy="3.5" r="2.6" fill="#56b4ea"/><circle cx="4.5" cy="9" r="2.6" fill="#1f7ad0"/><circle cx="12.5" cy="9" r="2.6" fill="#1f7ad0"/><path d="M0.5 14.5a3 3 0 0 1 3-3h10a3 3 0 0 1 3 3v0a3 3 0 0 1-3 3h-10a3 3 0 0 1-3-3z" fill="#2a86d6"/><path d="M4 12.5h9" stroke="#60b8f0" stroke-width="1"/></svg>
<div class="t" style="left:721.3px;top:182px;font-size:11.78px;color:#111;">Пользователи</div>
<svg class="a" style="left:812px;top:181px;" width="15" height="15" viewBox="0 0 15 15"><rect x="0" y="1" width="15" height="14" fill="#1e8fdc"/><rect x="0" y="1" width="15" height="3" fill="#0d5fa8"/><rect x="3" y="0" width="1.5" height="2.5" fill="#7ec8f5"/><rect x="10.5" y="0" width="1.5" height="2.5" fill="#7ec8f5"/><g fill="#bfe6ff"><circle cx="3.5" cy="7" r="0.8"/><circle cx="6.5" cy="7" r="0.8"/><circle cx="9.5" cy="7" r="0.8"/><circle cx="12.5" cy="7" r="0.8"/><circle cx="3.5" cy="10" r="0.8"/><circle cx="6.5" cy="10" r="0.8"/><circle cx="9.5" cy="10" r="0.8"/><circle cx="12.5" cy="10" r="0.8"/><circle cx="3.5" cy="13" r="0.8"/><circle cx="6.5" cy="13" r="0.8"/><circle cx="9.5" cy="13" r="0.8"/></g></svg>
<div class="t" style="left:833px;top:182px;font-size:11.52px;color:#111;">Возраст файлов</div>
<svg class="a" style="left:934px;top:181px;" width="14" height="16" viewBox="0 0 14 16"><path d="M0.5 0.5h8.5l3.5 3.5v11.5h-12z" fill="#fff" stroke="#777" stroke-width="1"/><path d="M9 0.5v3.5h3.5" fill="none" stroke="#999" stroke-width="0.8"/><path d="M6.5 13.5V4M3.2 7.3L6.5 4l3.3 3.3" stroke="#d9572b" stroke-width="1.6" fill="none"/></svg>
<div class="t" style="left:955.3px;top:182px;font-size:11.52px;color:#111;">Топ файлов</div>
<svg class="a" style="left:1032px;top:184px;" width="16" height="12" viewBox="0 0 16 12"><path d="M0 12L4.5 1L7.5 5.5L10 2.5L15.5 12z" fill="#c9582a"/><path d="M10 2.5L12.5 4.5L16 12H12z" fill="#efbf45"/><path d="M0 12V8.5L3.5 5.5L7 9L10 6.5L13.5 9.5L16 12z" fill="#1f6fa6"/></svg>
<div class="t" style="left:1054.6px;top:182px;font-size:11.88px;color:#111;">История</div>
<svg class="a" style="left:429px;top:217px;" width="23" height="24" viewBox="0 0 23 24"><path d="M11.5 24V4M2 12.5L11.5 3L21 12.5" stroke="#7f7f7f" stroke-width="3.6" fill="none"/></svg>
<div class="t" style="left:712.5px;width:300px;text-align:center;top:209px;font-size:11.84px;font-weight:bold;color:#111;">Windows Изменено</div>
<div class="t" style="left:712.5px;width:300px;text-align:center;top:224.5px;font-size:11.16px;font-weight:bold;color:#111;letter-spacing:-0.13px;">(Занято)</div>
<div class="a" style="left:515px;top:245px;width:1px;height:554px;background:#000;"></div>
<div class="a" style="left:506px;top:798px;width:705px;height:1px;background:#000;"></div>
<div class="a" style="left:506px;top:485px;width:9px;height:1px;background:#000;"></div>
<div class="t" style="left:493px;top:463px;transform:rotate(32deg);transform-origin:0 0;font-size:12px;color:#111;">5 ГБ</div>
<div class="a" style="left:567px;top:747px;width:71px;height:53px;background:#8fb7ec;border:1px solid #7090c8;"></div>
<div class="t" style="left:452px;width:300px;text-align:center;top:687.5px;color:#111;">838,6 МБ</div>
<div class="t" style="left:452px;width:300px;text-align:center;top:701.0px;color:#111;">3,0 %</div>
<div class="t" style="left:452px;width:300px;text-align:center;top:801px;color:#111;">1 день</div>
<div class="a" style="left:654px;top:783px;width:71px;height:17px;background:#8fb7ec;border:1px solid #7090c8;"></div>
<div class="t" style="left:539px;width:300px;text-align:center;top:723.5px;color:#111;">251,6 МБ</div>
<div class="t" style="left:539px;width:300px;text-align:center;top:737.0px;color:#111;">0,9 %</div>
<div class="t" style="left:539px;width:300px;text-align:center;top:799px;color:#111;">1 день - 1</div>
<div class="t" style="left:539px;width:300px;text-align:center;top:811.5px;color:#111;">неделя</div>
<div class="a" style="left:741px;top:361px;width:71px;height:439px;background:#8fb7ec;border:1px solid #7090c8;"></div>
<div class="t" style="left:626px;width:300px;text-align:center;top:301.5px;color:#111;">7,0 ГБ</div>
<div class="t" style="left:626px;width:300px;text-align:center;top:315.0px;color:#111;">25,6 %</div>
<div class="t" style="left:626px;width:300px;text-align:center;top:799px;color:#111;">1 неделя - 1</div>
<div class="t" style="left:626px;width:300px;text-align:center;top:811.5px;color:#111;">месяц</div>
<div class="a" style="left:828px;top:245px;width:71px;height:555px;background:#8fb7ec;border:1px solid #7090c8;"></div>
<div class="t" style="left:713px;width:300px;text-align:center;top:272px;color:#111;">8,8 ГБ</div>
<div class="t" style="left:713px;width:300px;text-align:center;top:285.5px;color:#111;">32,5 %</div>
<div class="t" style="left:713px;width:300px;text-align:center;top:799px;color:#111;">1 месяц - 6</div>
<div class="t" style="left:713px;width:300px;text-align:center;top:811.5px;color:#111;">мес.</div>
<div class="a" style="left:915px;top:639px;width:71px;height:161px;background:#8fb7ec;border:1px solid #7090c8;"></div>
<div class="t" style="left:800px;width:300px;text-align:center;top:579.5px;color:#111;">2,5 ГБ</div>
<div class="t" style="left:800px;width:300px;text-align:center;top:593.0px;color:#111;">9,3 %</div>
<div class="t" style="left:800px;width:300px;text-align:center;top:801px;color:#111;">6 мес. - 1 год</div>
<div class="a" style="left:1002px;top:687px;width:71px;height:113px;background:#8fb7ec;border:1px solid #7090c8;"></div>
<div class="t" style="left:887px;width:300px;text-align:center;top:627.5px;color:#111;">1,8 ГБ</div>
<div class="t" style="left:887px;width:300px;text-align:center;top:641.0px;color:#111;">6,5 %</div>
<div class="t" style="left:887px;width:300px;text-align:center;top:801px;color:#111;">1 год - 2 г.</div>
<div class="a" style="left:1088px;top:420px;width:71px;height:380px;background:#8fb7ec;border:1px solid #7090c8;"></div>
<div class="t" style="left:973px;width:300px;text-align:center;top:360.5px;color:#111;">6,0 ГБ</div>
<div class="t" style="left:973px;width:300px;text-align:center;top:374.0px;color:#111;">22,2 %</div>
<div class="t" style="left:973px;width:300px;text-align:center;top:801px;color:#111;">&gt; 2 г.</div>
<svg class="a" style="left:1304px;top:863px;" width="10" height="10" viewBox="0 0 10 10"><g fill="#b4b4b4"><rect x="7" y="0" width="2" height="2"/><rect x="4" y="3.5" width="2" height="2"/><rect x="7" y="3.5" width="2" height="2"/><rect x="1" y="7" width="2" height="2"/><rect x="4" y="7" width="2" height="2"/><rect x="7" y="7" width="2" height="2"/></g></svg>
</body></html>
